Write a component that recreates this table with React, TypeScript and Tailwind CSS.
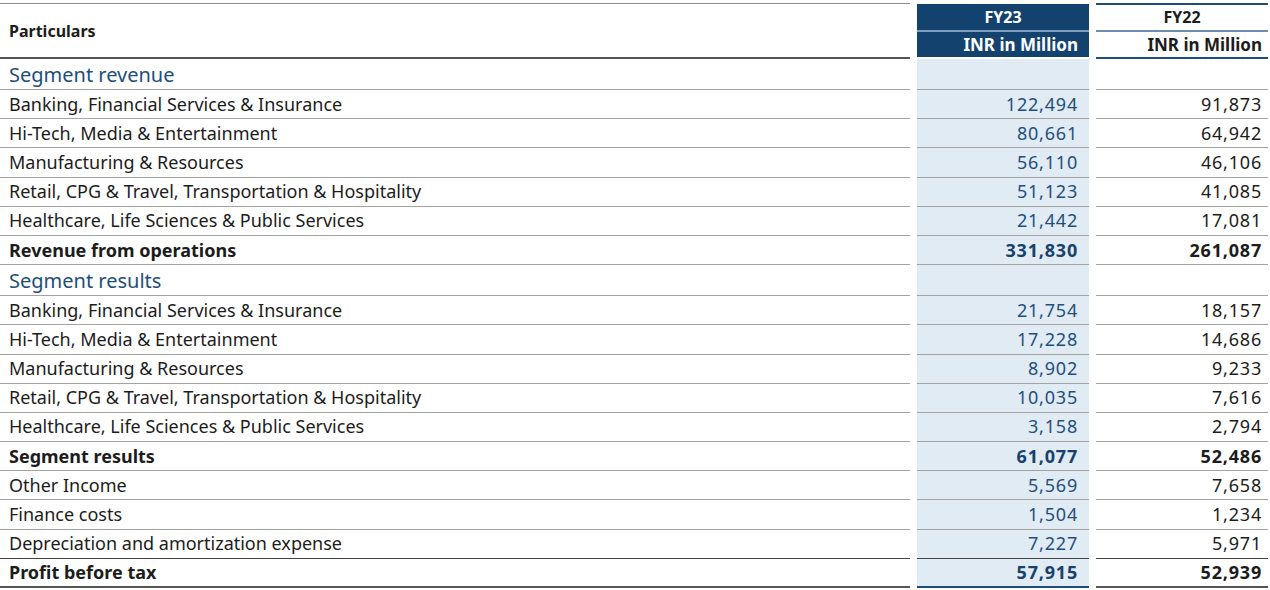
type Row = {
  label: string;
  fy23?: string;
  fy22?: string;
  kind: "section" | "item" | "total";
};

const rows: Row[] = [
  { label: "Segment revenue", kind: "section" },
  { label: "Banking, Financial Services & Insurance", fy23: "122,494", fy22: "91,873", kind: "item" },
  { label: "Hi-Tech, Media & Entertainment", fy23: "80,661", fy22: "64,942", kind: "item" },
  { label: "Manufacturing & Resources", fy23: "56,110", fy22: "46,106", kind: "item" },
  { label: "Retail, CPG & Travel, Transportation & Hospitality", fy23: "51,123", fy22: "41,085", kind: "item" },
  { label: "Healthcare, Life Sciences & Public Services", fy23: "21,442", fy22: "17,081", kind: "item" },
  { label: "Revenue from operations", fy23: "331,830", fy22: "261,087", kind: "total" },
  { label: "Segment results", kind: "section" },
  { label: "Banking, Financial Services & Insurance", fy23: "21,754", fy22: "18,157", kind: "item" },
  { label: "Hi-Tech, Media & Entertainment", fy23: "17,228", fy22: "14,686", kind: "item" },
  { label: "Manufacturing & Resources", fy23: "8,902", fy22: "9,233", kind: "item" },
  { label: "Retail, CPG & Travel, Transportation & Hospitality", fy23: "10,035", fy22: "7,616", kind: "item" },
  { label: "Healthcare, Life Sciences & Public Services", fy23: "3,158", fy22: "2,794", kind: "item" },
  { label: "Segment results", fy23: "61,077", fy22: "52,486", kind: "total" },
  { label: "Other Income", fy23: "5,569", fy22: "7,658", kind: "item" },
  { label: "Finance costs", fy23: "1,504", fy22: "1,234", kind: "item" },
  { label: "Depreciation and amortization expense", fy23: "7,227", fy22: "5,971", kind: "item" },
  { label: "Profit before tax", fy23: "57,915", fy22: "52,939", kind: "total" },
];

const font = { fontFamily: "'Noto Sans', 'Open Sans', sans-serif" };

export default function App() {
  return (
    <div className="w-[1270px] h-[590px] bg-white overflow-hidden text-[#1c1c1c]" style={font}>
      <div className="grid grid-cols-[910px_172px_172px] gap-x-[7px] pt-[3px]">
        {/* header */}
        <div className="h-[56px] border-t border-b-2 border-t-[#8c8c8c] border-b-[#555] flex items-center pl-[9px] text-[16px] font-bold">
          Particulars
        </div>
        <div className="h-[56px] pt-px pb-[2px] flex flex-col bg-white">
          <div className="flex-1 bg-[#14426f] border-b-2 border-[#7f9dbd] flex items-center justify-center text-white text-[16px] font-bold">
            FY23
          </div>
          <div className="flex-1 bg-[#14426f] flex items-center justify-end pr-[11px] text-white text-[17px] font-bold">
            INR in Million
          </div>
        </div>
        <div className="h-[56px] flex flex-col border-t-2 border-b-2 border-[#1f4d7a]">
          <div className="flex-1 border-b-2 border-[#6d8db0] flex items-center justify-center text-[16px] font-bold">
            FY22
          </div>
          <div className="flex-1 flex items-center justify-end pr-[6px] text-[17px] font-bold">
            INR in Million
          </div>
        </div>

        {rows.map((r, i) => {
          const last = i === rows.length - 1;
          const bottom = last
            ? "border-b-2 border-[#555]"
            : i + 1 === rows.length - 1
              ? "border-b border-[#444]"
              : "border-b border-[#a3a3a3]";
          const h = r.kind === "section" ? "h-[31px]" : "h-[29.2px]";
          const num = `text-[18px] tracking-[0.8px] ${r.kind === "total" ? "font-bold" : ""}`;
          return (
            <div key={i} className="contents">
              <div
                className={`${h} ${bottom} flex items-center pl-[9px] ${
                  r.kind === "section"
                    ? "text-[20px] text-[#1d4e7d] pt-[2px]"
                    : r.kind === "total"
                      ? "text-[18px] font-bold"
                      : "text-[18px]"
                }`}
              >
                {r.label}
              </div>
              <div
                className={`${h} ${
                  last ? "border-b-2 border-[#1f4d7a]" : bottom
                } bg-[#e1ebf3] flex items-center justify-end pr-[11px] ${num} ${
                  r.kind === "total" ? "text-[#17426d]" : "text-[#1f4f80]"
                }`}
              >
                {r.fy23}
              </div>
              <div className={`${h} ${bottom} flex items-center justify-end pr-[6px] ${num}`}>
                {r.fy22}
              </div>
            </div>
          );
        })}
      </div>
    </div>
  );
}
